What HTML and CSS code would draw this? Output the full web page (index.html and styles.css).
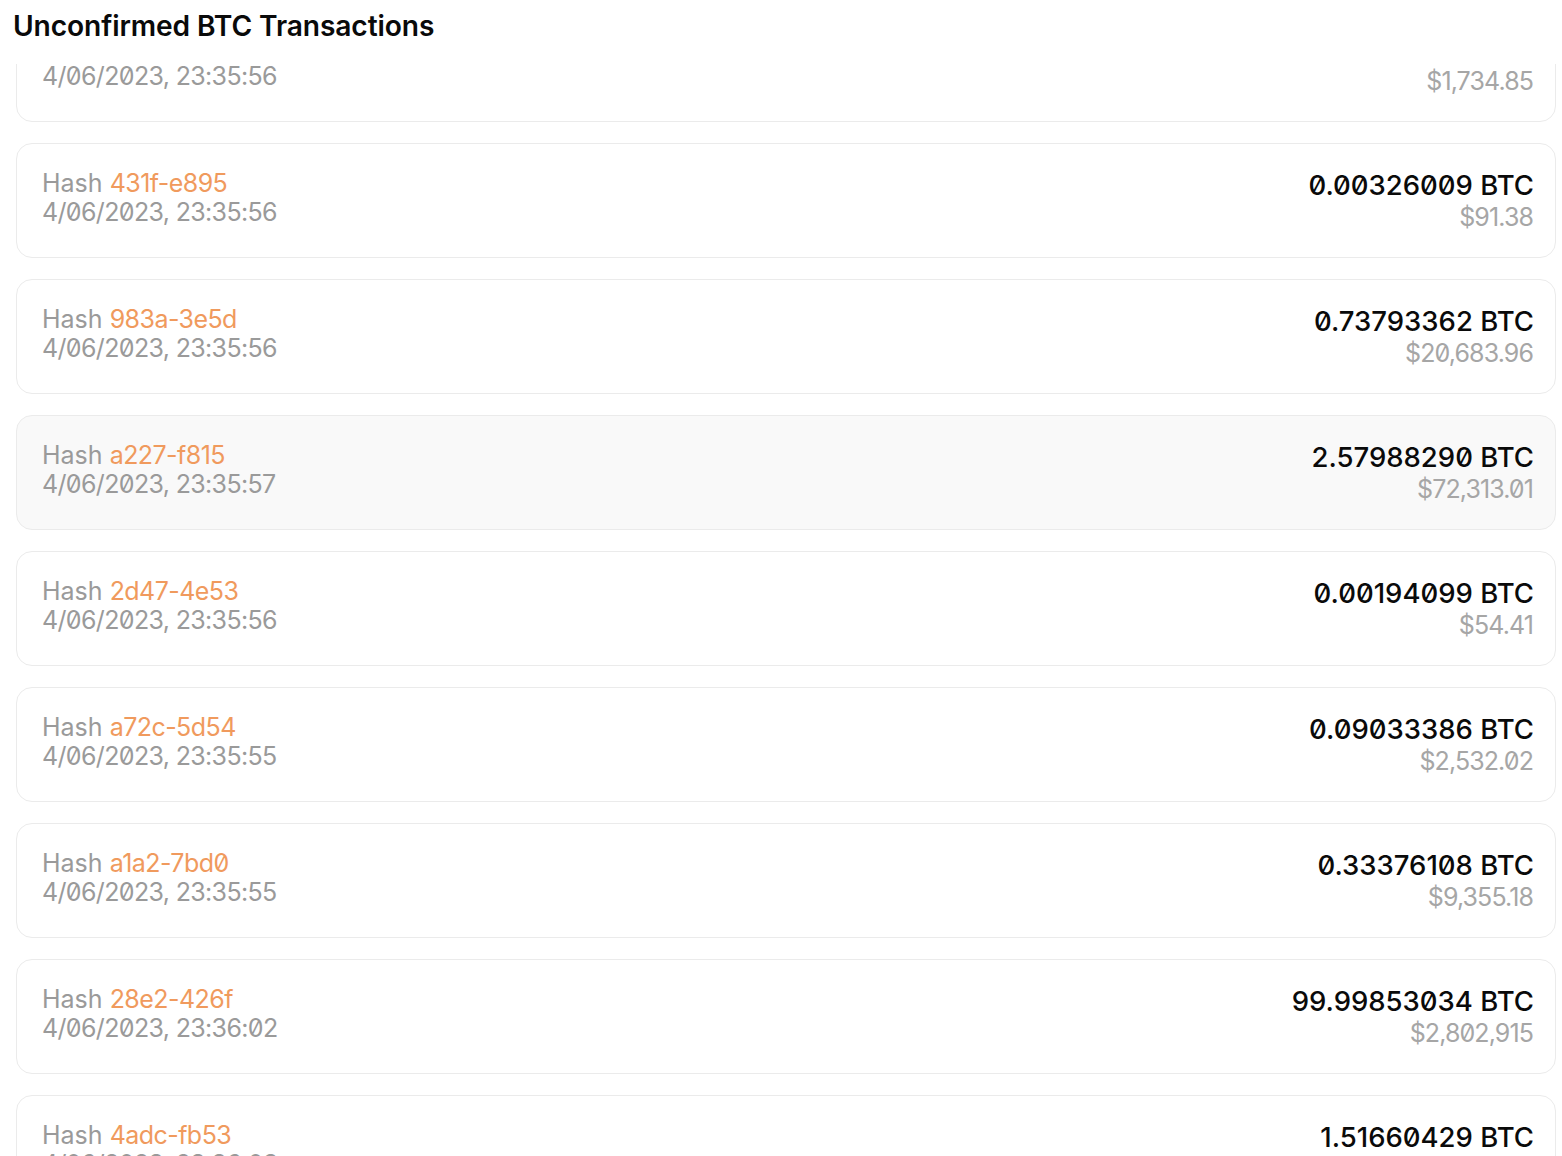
FILE: index.html
```html
<!DOCTYPE html>
<html>
<head>
<meta charset="utf-8">
<link rel="stylesheet" href="styles.css">
</head>
<body>
<h1 class="title">Unconfirmed BTC Transactions</h1>
<div class="viewport">
  <ul class="list">
    <li class="tx">
      <div class="info"><div class="hash-line"><span class="label">Hash</span> <span class="hash">7c0e-19ab</span></div><div class="date">4/06/2023, 23:35:56</div></div>
      <div class="amount"><div class="btc">0.06189004 BTC</div><div class="usd">$1,734.85</div></div>
    </li>
    <li class="tx">
      <div class="info"><div class="hash-line"><span class="label">Hash</span> <span class="hash">431f-e895</span></div><div class="date">4/06/2023, 23:35:56</div></div>
      <div class="amount"><div class="btc">0.00326009 BTC</div><div class="usd">$91.38</div></div>
    </li>
    <li class="tx">
      <div class="info"><div class="hash-line"><span class="label">Hash</span> <span class="hash">983a-3e5d</span></div><div class="date">4/06/2023, 23:35:56</div></div>
      <div class="amount"><div class="btc">0.73793362 BTC</div><div class="usd">$20,683.96</div></div>
    </li>
    <li class="tx tx-hover">
      <div class="info"><div class="hash-line"><span class="label">Hash</span> <span class="hash">a227-f815</span></div><div class="date">4/06/2023, 23:35:57</div></div>
      <div class="amount"><div class="btc">2.57988290 BTC</div><div class="usd">$72,313.01</div></div>
    </li>
    <li class="tx">
      <div class="info"><div class="hash-line"><span class="label">Hash</span> <span class="hash">2d47-4e53</span></div><div class="date">4/06/2023, 23:35:56</div></div>
      <div class="amount"><div class="btc">0.00194099 BTC</div><div class="usd">$54.41</div></div>
    </li>
    <li class="tx">
      <div class="info"><div class="hash-line"><span class="label">Hash</span> <span class="hash">a72c-5d54</span></div><div class="date">4/06/2023, 23:35:55</div></div>
      <div class="amount"><div class="btc">0.09033386 BTC</div><div class="usd">$2,532.02</div></div>
    </li>
    <li class="tx">
      <div class="info"><div class="hash-line"><span class="label">Hash</span> <span class="hash">a1a2-7bd0</span></div><div class="date">4/06/2023, 23:35:55</div></div>
      <div class="amount"><div class="btc">0.33376108 BTC</div><div class="usd">$9,355.18</div></div>
    </li>
    <li class="tx">
      <div class="info"><div class="hash-line"><span class="label">Hash</span> <span class="hash">28e2-426f</span></div><div class="date">4/06/2023, 23:36:02</div></div>
      <div class="amount"><div class="btc">99.99853034 BTC</div><div class="usd">$2,802,915</div></div>
    </li>
    <li class="tx">
      <div class="info"><div class="hash-line"><span class="label">Hash</span> <span class="hash">4adc-fb53</span></div><div class="date">4/06/2023, 23:36:03</div></div>
      <div class="amount"><div class="btc">1.51660429 BTC</div><div class="usd">$42,511.07</div></div>
    </li>
  </ul>
</div>
</body>
</html>
```
FILE: styles.css
```css
html, body {
  margin: 0;
  padding: 0;
  background: #ffffff;
  height: 100%;
  overflow: hidden;
}
body {
  font-family: Inter, "Liberation Sans", sans-serif;
  color: #111;
  display: flex;
  flex-direction: column;
}
.title {
  margin: 0;
  padding: 8px 0 0 13px;
  height: 64px;
  flex: none;
  box-sizing: border-box;
  font-size: 28.15px;
  font-weight: 600;
  line-height: 36px;
  letter-spacing: -0.1px;
  color: #0a0a0a;
}
.viewport {
  flex: 1;
  overflow: hidden;
  padding: 0 6px 0 16px;
}
.list {
  list-style: none;
  margin: -57px 0 0 0;
  padding: 0;
  display: flex;
  flex-direction: column;
  gap: 21px;
}
.tx {
  display: flex;
  justify-content: space-between;
  align-items: flex-start;
  border: 1px solid #ebebeb;
  border-radius: 16px;
  background: #fff;
  padding: 25px 21px 23px 25px;
  height: 115px;
  box-sizing: border-box;
  font-variant-numeric: slashed-zero;
  font-feature-settings: "zero" 1;
}
.tx-hover {
  background: #f9f9f9;
}
.info {
  font-size: 25px;
  line-height: 29px;
  color: #9a9a9a;
}
.hash {
  color: #f09a5d;
  letter-spacing: -0.55px;
}
.date {
  letter-spacing: -0.65px;
}
.amount {
  text-align: right;
}
.btc {
  font-size: 27.5px;
  line-height: 32px;
  font-weight: 500;
  color: #0a0a0a;
}
.usd {
  font-size: 25px;
  line-height: 33px;
  color: #a6a6a6;
  letter-spacing: -0.9px;
  padding-right: 1px;
}
```
